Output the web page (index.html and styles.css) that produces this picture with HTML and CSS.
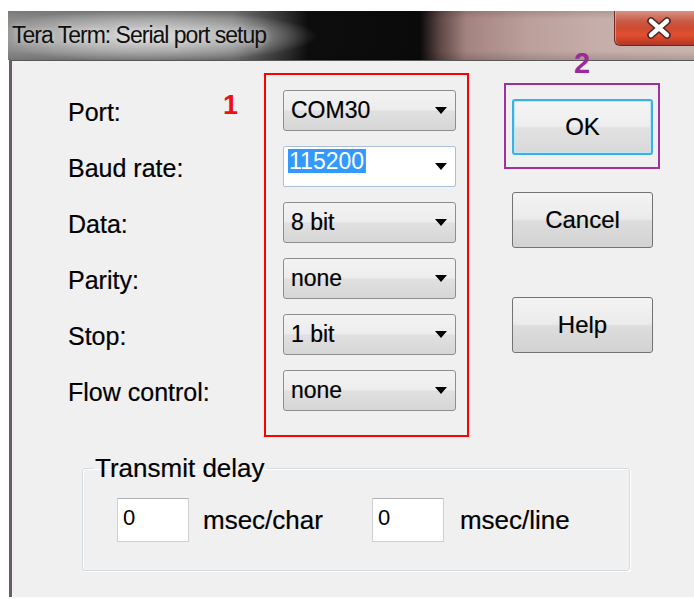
FILE: index.html
```html
<!DOCTYPE html>
<html lang="en">
<head>
<meta charset="utf-8">
<title>Tera Term: Serial port setup</title>
<link rel="stylesheet" href="styles.css">
</head>
<body>
<div class="window">
  <header class="titlebar">
    <span class="title">Tera Term: Serial port setup</span>
    <button class="close" type="button" aria-label="Close">
      <svg width="26" height="22" viewBox="0 0 26 22">
        <path d="M5 4 L21 18 M21 4 L5 18" stroke="#4a2622" stroke-width="7.5" stroke-linecap="round" fill="none"/>
        <path d="M5 4 L21 18 M21 4 L5 18" stroke="#ffffff" stroke-width="4.5" stroke-linecap="round" fill="none"/>
      </svg>
    </button>
  </header>
  <main class="client">
    <div class="settings-row">
      <div class="labels">
        <div class="label">Port:</div>
        <div class="label">Baud rate:</div>
        <div class="label">Data:</div>
        <div class="label">Parity:</div>
        <div class="label">Stop:</div>
        <div class="label">Flow control:</div>
      </div>
      <div class="combos">
        <span class="mark mark-red">1</span>
        <div class="combo"><span class="value">COM30</span><i class="arrow"></i></div>
        <div class="combo combo-edit"><span class="sel">115200</span><i class="arrow"></i></div>
        <div class="combo"><span class="value">8 bit</span><i class="arrow"></i></div>
        <div class="combo"><span class="value">none</span><i class="arrow"></i></div>
        <div class="combo"><span class="value">1 bit</span><i class="arrow"></i></div>
        <div class="combo"><span class="value">none</span><i class="arrow"></i></div>
      </div>
      <div class="actions">
        <div class="default-frame">
          <span class="mark mark-purple">2</span>
          <button class="btn btn-default" type="button">OK</button>
        </div>
        <button class="btn btn-cancel" type="button">Cancel</button>
        <button class="btn btn-help" type="button">Help</button>
      </div>
    </div>
    <fieldset class="delay">
      <legend>Transmit delay</legend>
      <div class="delay-row">
        <span class="field">0</span><span class="unit">msec/char</span>
        <span class="field field-line">0</span><span class="unit unit-line">msec/line</span>
      </div>
    </fieldset>
  </main>
</div>
</body>
</html>
```
FILE: styles.css
```css
html, body {
  margin: 0;
  padding: 0;
  background: #ffffff;
  overflow: hidden;
}

body {
  font-family: "Liberation Sans", Arial, sans-serif;
  color: #000000;
}

/* dialog window, runs past the right edge */
.window {
  margin: 11px 0 0 8px;
  width: 700px;
}

/* Aero-style caption */
.titlebar {
  display: flex;
  align-items: flex-start;
  height: 49px;
  background:
    radial-gradient(ellipse 170px 26px at 140px 25px, rgba(236,236,236,0.85) 0%, rgba(214,214,214,0.55) 55%, rgba(200,200,200,0) 100%),
    linear-gradient(to bottom, rgba(0,0,0,0.12) 0, rgba(0,0,0,0) 8px, rgba(0,0,0,0) 40px, rgba(0,0,0,0.15) 100%),
    linear-gradient(to right, #8a8a8a 0px, #7b7b7b 225px, #2e2e2e 280px, #0d0d0d 300px, #0a0a0a 412px, #5e4745 432px, #a3837f 458px, #bb9f9b 520px, #c6aeaa 590px, #cab4b0 100%);
}

.title {
  padding-left: 4px;
  font-size: 23px;
  line-height: 49px;
  letter-spacing: -1px;
  color: #101010;
  text-shadow: 0 0 6px rgba(255,255,255,0.6);
  white-space: nowrap;
}

.close {
  margin-left: auto;
  width: 94px;
  height: 35px;
  padding: 0;
  border: 1px solid #6b2a22;
  border-top: none;
  border-right: none;
  border-radius: 0 0 0 6px;
  background: linear-gradient(to bottom, #d99282 0%, #c95b47 30%, #cf4a31 50%, #e0502f 70%, #c83f27 88%, #a9382a 100%);
  box-shadow: inset 1px 0 0 rgba(255,200,190,0.5);
  display: flex;
  align-items: center;
  justify-content: flex-start;
}

.close svg {
  display: block;
  margin-left: 31px;
}

/* client area */
.client {
  box-sizing: border-box;
  height: 537px;
  margin-left: 1px;
  border-top: 1px solid #585858;
  border-left: 3px solid #6a5c69;
  background: #f0f0f0;
}

.settings-row {
  display: flex;
  align-items: flex-start;
  padding: 12px 0 0 56px;
}

.labels {
  width: 196px;
  margin-top: 19px;
  display: flex;
  flex-direction: column;
  gap: 15px;
}

.label {
  height: 41px;
  line-height: 41px;
  font-size: 25px;
  color: #000000;
  -webkit-text-stroke: 0.2px #000000;
  white-space: nowrap;
}

/* highlighted group of drop-down lists */
.combos {
  position: relative;
  display: flex;
  flex-direction: column;
  gap: 15px;
  padding: 15px 11px 24px 17px;
  border: 2px solid #ff0000;
}

.mark {
  position: absolute;
  font-weight: bold;
  line-height: 1;
}

.mark-red {
  left: -43px;
  top: 17px;
  font-size: 27px;
  color: #f01010;
}

.combo {
  box-sizing: border-box;
  width: 173px;
  height: 41px;
  display: flex;
  align-items: center;
  justify-content: space-between;
  padding: 0 8px 0 7px;
  border: 1px solid #8e8e8e;
  border-radius: 3px;
  background: linear-gradient(to bottom, #f3f3f3 0%, #ececec 48%, #e0e0e0 52%, #d6d6d6 100%);
  font-size: 23px;
  color: #000000;
  -webkit-text-stroke: 0.2px #000000;
}

.combo-edit {
  align-items: flex-start;
  padding-left: 4px;
  border-color: #a9c0d8;
  border-radius: 2px;
  background: #ffffff;
  -webkit-text-stroke: 0;
}

.combo-edit .arrow {
  align-self: center;
}

.sel {
  margin-top: 2px;
  height: 24px;
  line-height: 24px;
  padding: 0 1px;
  background: #3399ff;
  color: #ffffff;
  border-right: 1px solid #d07a2a;
}

.arrow {
  width: 0;
  height: 0;
  border-left: 6px solid transparent;
  border-right: 6px solid transparent;
  border-top: 7px solid #000000;
}

/* command buttons */
.actions {
  display: flex;
  flex-direction: column;
  align-items: flex-start;
  margin: 10px 0 0 35px;
}

.default-frame {
  position: relative;
  padding: 14px 5px 12px 6px;
  border: 2px solid #a0309c;
}

.mark-purple {
  left: 50%;
  transform: translateX(-50%);
  top: -36px;
  font-size: 29px;
  color: #9b2a96;
}

.btn {
  box-sizing: border-box;
  width: 141px;
  height: 56px;
  padding: 0;
  border: 1px solid #737373;
  border-radius: 3px;
  background: linear-gradient(to bottom, #f3f3f3 0%, #ebebeb 48%, #dddddd 52%, #d2d2d2 100%);
  font-family: "Liberation Sans", Arial, sans-serif;
  font-size: 24px;
  color: #000000;
  -webkit-text-stroke: 0.2px #000000;
}

.btn-default {
  display: block;
  border: 2px solid #3ab0e4;
  box-shadow: inset 0 0 0 1px #bfe6f7;
  background: linear-gradient(to bottom, #f5f5f5 0%, #eeeeee 48%, #e2e2e2 52%, #d8d8d8 100%);
}

.btn-cancel {
  margin: 23px 0 0 8px;
}

.btn-help {
  margin: 49px 0 0 8px;
}

/* transmit delay group box */
.delay {
  box-sizing: border-box;
  width: 548px;
  min-width: 0;
  margin: 18px 0 0 70px;
  padding: 0 0 28px 0;
  border: 1px solid #d5dde3;
  border-radius: 3px;
  box-shadow: inset 1px 1px 0 #ffffff, 1px 1px 0 #ffffff;
}

.delay legend {
  margin-left: 10px;
  padding: 0 2px;
  font-size: 26px;
  line-height: 26px;
  color: #000000;
  -webkit-text-stroke: 0.2px #000000;
}

.delay-row {
  display: flex;
  align-items: flex-start;
  margin-top: 17px;
  padding-left: 34px;
}

.field {
  box-sizing: border-box;
  width: 72px;
  height: 44px;
  padding: 7px 0 0 5px;
  border: 1px solid #d0d0d0;
  border-top-color: #b2b2b2;
  background: #ffffff;
  font-size: 22px;
  line-height: 24px;
  color: #000000;
}

.unit {
  margin-left: 14px;
  font-size: 26px;
  line-height: 44px;
  color: #000000;
  -webkit-text-stroke: 0.2px #000000;
}

.field-line {
  margin-left: 49px;
}

.unit-line {
  margin-left: 16px;
}
```
